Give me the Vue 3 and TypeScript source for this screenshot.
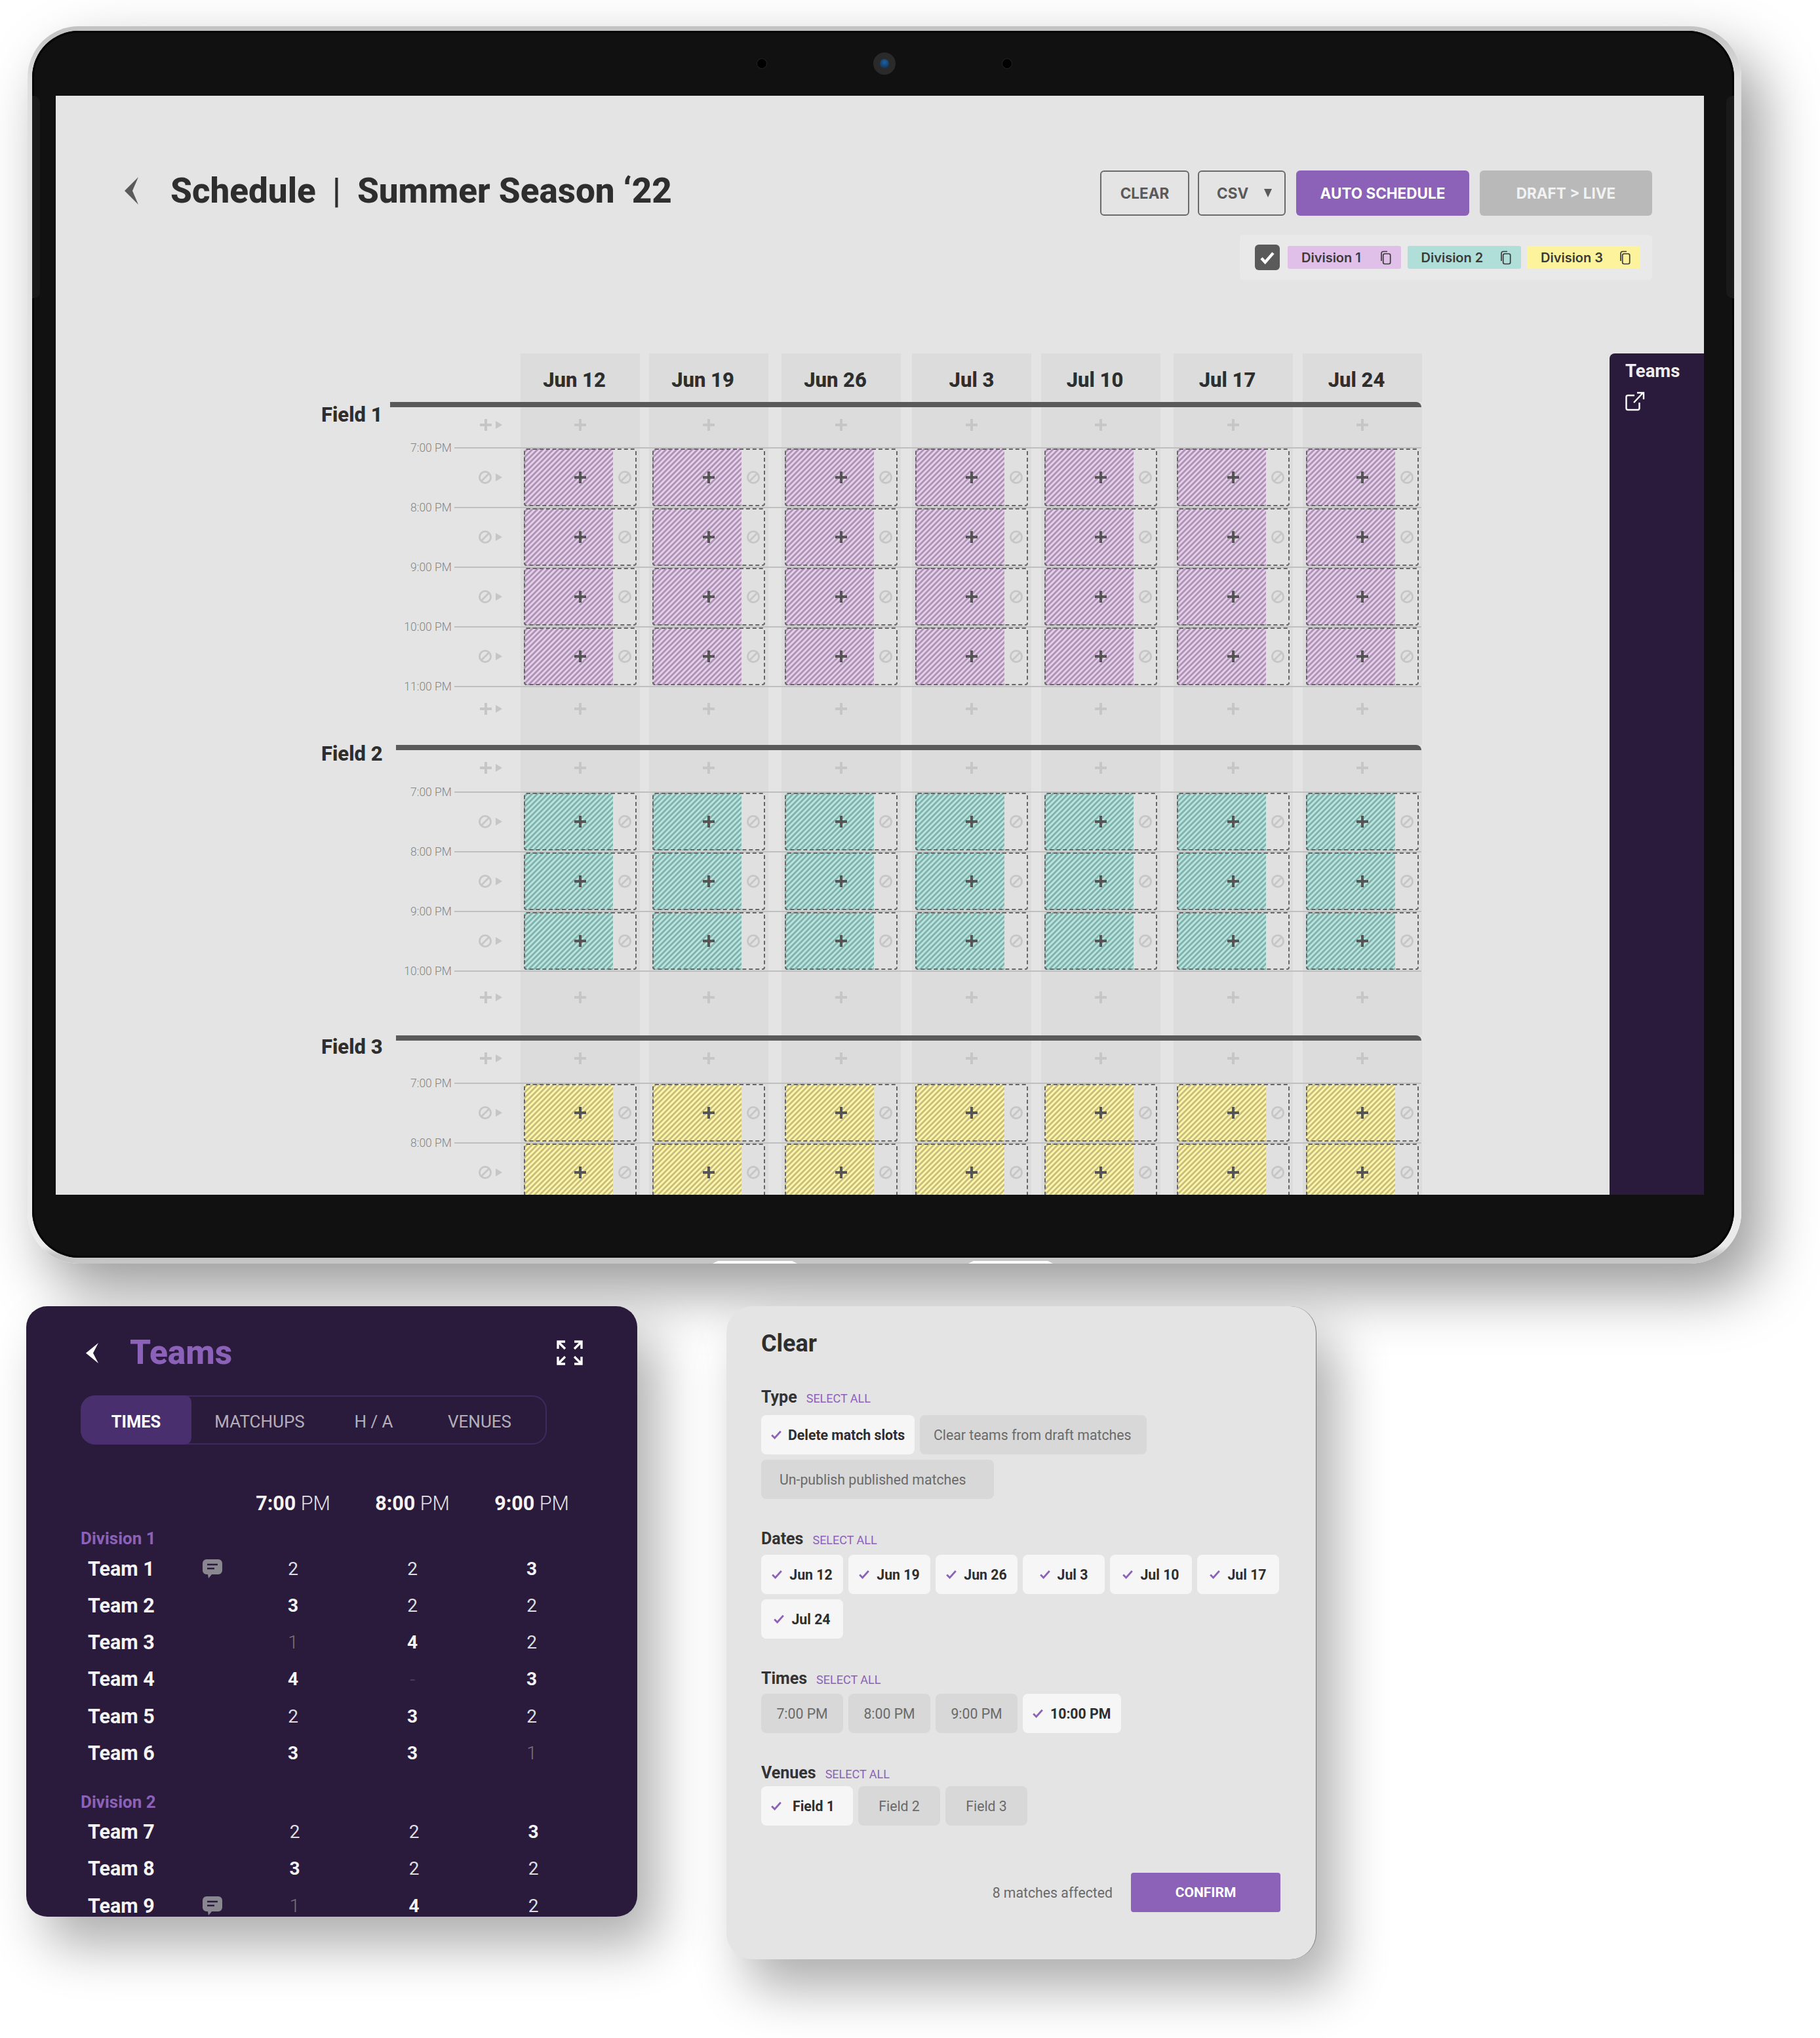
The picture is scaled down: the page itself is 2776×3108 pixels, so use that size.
<script setup lang="ts">
interface Field {
  name: string
  cls: string
  times: string[]
  barLeft: number
  labelTop: number
  addH: number
  tailH: number
  tailTop: number
}
const dates = ['Jun 12', 'Jun 19', 'Jun 26', 'Jul 3', 'Jul 10', 'Jul 17', 'Jul 24']
const fields: Field[] = [
  { name: 'Field 1', cls: 'purple', times: ['7:00 PM', '8:00 PM', '9:00 PM', '10:00 PM', '11:00 PM'], barLeft: 115, labelTop: 2, addH: 61, tailH: 88, tailTop: 24 },
  { name: 'Field 2', cls: 'teal', times: ['7:00 PM', '8:00 PM', '9:00 PM', '10:00 PM'], barLeft: 124, labelTop: -4, addH: 63, tailH: 97, tailTop: 30 },
  { name: 'Field 3', cls: 'yellow', times: ['7:00 PM', '8:00 PM', ''], barLeft: 124, labelTop: 0, addH: 64, tailH: 0, tailTop: 0 },
]
const legend = [
  { name: 'Division 1', cls: 'l-purple' },
  { name: 'Division 2', cls: 'l-teal' },
  { name: 'Division 3', cls: 'l-yellow' },
]
interface Team { name: string; note?: boolean; v: string[] }
const groups: { name: string; cls: string; teams: Team[] }[] = [
  {
    name: 'Division 1',
    cls: 'd1',
    teams: [
      { name: 'Team 1', note: true, v: ['2', '2', '3'] },
      { name: 'Team 2', v: ['3', '2', '2'] },
      { name: 'Team 3', v: ['1', '4', '2'] },
      { name: 'Team 4', v: ['4', '-', '3'] },
      { name: 'Team 5', v: ['2', '3', '2'] },
      { name: 'Team 6', v: ['3', '3', '1'] },
    ],
  },
  {
    name: 'Division 2',
    cls: 'd2',
    teams: [
      { name: 'Team 7', v: ['2', '2', '3'] },
      { name: 'Team 8', v: ['3', '2', '2'] },
      { name: 'Team 9', note: true, v: ['1', '4', '2'] },
    ],
  },
]
function numClass(v: string): string {
  return 'n' + (v === '-' ? '0' : v)
}
interface Chip { text: string; on: boolean; cls?: string }
const sections: { label: string; mb: number; chips: Chip[] }[] = [
  {
    label: 'Type', mb: 11,
    chips: [
      { text: 'Delete match slots', on: true, cls: 'auto' },
      { text: 'Clear teams from draft matches', on: false, cls: 'c-clear' },
      { text: 'Un-publish published matches', on: false, cls: 'c-unpub' },
    ],
  },
  { label: 'Dates', mb: 8, chips: dates.map((d) => ({ text: d, on: true })) },
  {
    label: 'Times', mb: 7,
    chips: [
      { text: '7:00 PM', on: false },
      { text: '8:00 PM', on: false },
      { text: '9:00 PM', on: false },
      { text: '10:00 PM', on: true, cls: 'auto2' },
    ],
  },
  {
    label: 'Venues', mb: 4,
    chips: [
      { text: 'Field 1', on: true, cls: 'c-f1' },
      { text: 'Field 2', on: false },
      { text: 'Field 3', on: false },
    ],
  },
]
</script>

<template>
  <div class="page">
    <svg class="defs" width="0" height="0">
      <symbol id="i-plus" viewBox="0 0 18 18"><path d="M9 0v18M0 9h18" fill="none" stroke="currentColor" stroke-width="4" /></symbol>
      <symbol id="i-ban" viewBox="0 0 20 20"><circle cx="10" cy="10" r="8.6" fill="none" stroke="currentColor" stroke-width="2.8" /><path d="M4 16L16 4" stroke="currentColor" stroke-width="2.8" /></symbol>
      <symbol id="i-copy" viewBox="0 0 18 22"><path d="M3 16V4.5C3 2.6 4.2 1.5 6 1.5h6" fill="none" stroke="currentColor" stroke-width="1.7" /><rect x="5.7" y="5" width="11" height="15.5" rx="2.4" fill="none" stroke="currentColor" stroke-width="1.7" /></symbol>
      <symbol id="i-check" viewBox="0 0 16 14"><path d="M1.2 7.5L5.6 12 14.8 1.8" fill="none" stroke="currentColor" stroke-width="2.8" /></symbol>
      <symbol id="i-note" viewBox="0 0 30 30"><path d="M6 0h18a6 6 0 0 1 6 6v11a6 6 0 0 1-6 6H14l-5 6-1-6H6a6 6 0 0 1-6-6V6a6 6 0 0 1 6-6z" fill="#8b8790" /><path d="M7 8h16M7 14h11" stroke="#2a1b3d" stroke-width="2.6" /></symbol>
    </svg>

    <div class="device">
      <span class="side left"></span>
      <span class="side right"></span>
      <span class="tab-notch n1"></span>
      <span class="tab-notch n2"></span>
      <div class="bezel">
        <div class="sensors">
          <span class="dot"></span>
          <span class="cam"><i></i></span>
          <span class="dot"></span>
        </div>
        <div class="screen">
          <div class="topbar">
            <div class="title-wrap">
              <svg class="back" width="21" height="42" viewBox="0 0 21 42"><path d="M21 0L0 21l21 21-9-21z" fill="#5a5a5a" /></svg>
              <h1 class="title"><span>Schedule</span><span class="sep">|</span><span>Summer Season ‘22</span></h1>
            </div>
            <div class="actions">
              <div class="btns">
                <button class="btn outline clear-b">CLEAR</button>
                <button class="btn outline csv-b">CSV<span class="caret"></span></button>
                <button class="btn primary">AUTO SCHEDULE</button>
                <button class="btn muted">DRAFT &gt; LIVE</button>
              </div>
              <div class="legend">
                <span class="legend-check"><svg width="22" height="20" viewBox="0 0 16 14"><path d="M1.500 7.500L5.600 12 14.500 1.800" fill="none" stroke="currentColor" stroke-width="3.200" /></svg></span>
                <span v-for="l in legend" :key="l.name" class="legend-chip" :class="l.cls">
                  {{ l.name }}
                  <svg width="18" height="22"><use href="#i-copy" /></svg>
                </span>
              </div>
            </div>
          </div>

          <div class="sched">
            <div class="row head">
              <div class="gutter"></div>
              <div v-for="d in dates" :key="d" class="cell">
                <span class="date" :class="{ centre: d === 'Jul 3' }">{{ d }}</span>
              </div>
              <svg class="plus add-date" width="18" height="18"><use href="#i-plus" /></svg>
            </div>

            <section v-for="f in fields" :key="f.name" class="field" :style="{ '--tail-h': f.tailH + 'px', '--tail-top': f.tailTop + 'px', '--add-h': f.addH + 'px' }">
              <div class="bar-row">
                <div class="flabel" :style="{ width: f.barLeft + 'px', marginTop: f.labelTop + 'px' }">{{ f.name }}</div>
                <div class="bar"></div>
              </div>
              <div class="row add">
                <div class="gutter icons">
                  <svg class="plus" width="18" height="18"><use href="#i-plus" /></svg>
                  <span class="tri"></span>
                </div>
                <div v-for="d in dates" :key="d" class="cell">
                  <svg class="plus" width="18" height="18"><use href="#i-plus" /></svg>
                </div>
              </div>
              <template v-for="(t, i) in f.times" :key="i">
                <div v-if="t" class="tline">
                  <span class="tlabel">{{ t }}</span>
                  <span class="tbar"></span>
                </div>
                <div v-if="i < f.times.length - 1" class="row slots">
                  <div class="gutter icons ban-g">
                    <svg class="ban" width="20" height="20"><use href="#i-ban" /></svg>
                    <span class="tri"></span>
                  </div>
                  <div v-for="d in dates" :key="d" class="cell">
                    <div class="slot" :class="f.cls">
                      <svg class="splus" width="18" height="18"><use href="#i-plus" /></svg>
                      <svg class="ban" width="20" height="20"><use href="#i-ban" /></svg>
                    </div>
                  </div>
                </div>
              </template>
              <div v-if="f.tailH" class="row tail">
                <div class="gutter icons">
                  <svg class="plus" width="18" height="18"><use href="#i-plus" /></svg>
                  <span class="tri"></span>
                </div>
                <div v-for="d in dates" :key="d" class="cell">
                  <svg class="plus" width="18" height="18"><use href="#i-plus" /></svg>
                </div>
              </div>
            </section>
          </div>

          <aside class="drawer">
            <div class="drawer-title">Teams</div>
            <svg width="30" height="30" viewBox="0 0 30 30"><path d="M14 6H4a2.5 2.5 0 0 0-2.5 2.5v17A2.5 2.5 0 0 0 4 28h15a2.5 2.5 0 0 0 2.5-2.5V17" fill="none" stroke="#fff" stroke-width="2.4" /><path d="M13 17L27 2M18 2h10v10" fill="none" stroke="#fff" stroke-width="2.4" /></svg>
          </aside>
        </div>
      </div>
    </div>

    <div class="cards">
      <div class="teams">
        <div class="teams-head">
          <svg width="19" height="33" viewBox="0 0 19 33"><path d="M19 1L0 16.500 19 32 11 16.500z" fill="#fff" /></svg>
          <h2>Teams</h2>
          <svg class="expand" width="40" height="38" viewBox="0 0 40 38"><path d="M13 2H2v11M2 2l11 11M27 2h11v11M38 2L27 13M13 36H2V25M2 36l11-11M27 36h11V25M38 36L27 25" fill="none" stroke="#fff" stroke-width="3.400" /></svg>
        </div>
        <div class="tabs">
          <span class="tab t-active">TIMES</span>
          <span class="tab t-match">MATCHUPS</span>
          <span class="tab t-ha">H / A</span>
          <span class="tab t-venue">VENUES</span>
        </div>
        <div class="hours">
          <span v-for="h in ['7:00', '8:00', '9:00']" :key="h"><b>{{ h }}</b> PM</span>
        </div>
        <div v-for="g in groups" :key="g.name" class="group" :class="g.cls">
          <div class="gname">{{ g.name }}</div>
          <div v-for="t in g.teams" :key="t.name" class="team">
            <span class="tname">{{ t.name }}</span>
            <span class="tnote"><svg v-if="t.note" width="30" height="30"><use href="#i-note" /></svg></span>
            <span v-for="(v, i) in t.v" :key="i" class="num" :class="numClass(v)">{{ v }}</span>
          </div>
        </div>
      </div>

      <div class="clear">
        <h2>Clear</h2>
        <div v-for="s in sections" :key="s.label" class="sec">
          <div class="sec-head" :style="{ marginBottom: s.mb + 'px' }">
            <span class="sec-label">{{ s.label }}</span>
            <span class="sel">SELECT ALL</span>
          </div>
          <div class="chips">
            <span v-for="c in s.chips" :key="c.text" class="chip" :class="[c.on ? 'on' : 'off', c.cls]">
              <svg v-if="c.on" width="16" height="14"><use href="#i-check" /></svg>
              {{ c.text }}
            </span>
          </div>
        </div>
        <div class="foot">
          <span>8 matches affected</span>
          <button class="confirm">CONFIRM</button>
        </div>
      </div>
    </div>
  </div>
</template>

<style>
html, body { background: #fff; }
</style>

<style scoped>
.page {
  width: 2776px;
  height: 3108px;
  box-sizing: border-box;
  padding: 40px 0 0 42px;
  background: #fff;
  overflow: hidden;
  font-family: Roboto, "Liberation Sans", sans-serif;
}
.defs { position: absolute; }
button { font-family: inherit; border: 0; padding: 0; }
h1, h2 { margin: 0; }

.device {
  position: relative;
  width: 2614px;
  height: 1887px;
  box-sizing: border-box;
  padding: 7px 11px 9px 7px;
  border-radius: 78px;
  background: linear-gradient(180deg, #c4c4c4 0 12px, #dfdfdf 80px, #ebebeb 1860px, #c6c6c6 1874px);
  box-shadow: 30px 42px 90px rgba(0, 0, 0, 0.4);
}
.side {
  position: absolute;
  top: 106px;
  height: 309px;
  width: 12px;
  background: #1a1a1a;
  z-index: 2;
}
.side.left { left: 7px; border-radius: 0 10px 10px 0; }
.side.right { right: 11px; border-radius: 10px 0 0 10px; }
.tab-notch {
  position: absolute;
  bottom: 0;
  width: 129px;
  height: 4px;
  background: #fff;
  clip-path: polygon(6% 0, 94% 0, 100% 100%, 0 100%);
}
.tab-notch.n1 { left: 1045px; }
.tab-notch.n2 { left: 1435px; }
.bezel {
  height: 100%;
  box-sizing: border-box;
  padding: 0 46px 96px 36px;
  background: #111;
  border-radius: 71px;
  box-shadow: inset 0 0 0 3px #050505;
}
.sensors {
  height: 99px;
  display: flex;
  align-items: center;
  justify-content: center;
  gap: 163px;
  padding: 0 0 0 13px;
  box-sizing: border-box;
}
.dot {
  width: 14px;
  height: 14px;
  border-radius: 50%;
  background: #000;
  box-shadow: 0 0 0 1px #222;
}
.cam {
  width: 34px;
  height: 34px;
  border-radius: 50%;
  background: #2a2a2a;
  display: flex;
  align-items: center;
  justify-content: center;
}
.cam i {
  width: 14px;
  height: 14px;
  border-radius: 50%;
  background: radial-gradient(circle at 50% 35%, #21609f, #0c2a50);
}
.screen {
  position: relative;
  height: 1676px;
  background: #e4e4e4;
  overflow: hidden;
}

.topbar {
  display: flex;
  justify-content: space-between;
  padding: 114px 79px 0 105px;
  height: 393px;
  box-sizing: border-box;
}
.title-wrap { display: flex; align-items: flex-start; gap: 49px; padding-top: 10px; }
.title {
  display: flex;
  gap: 25px;
  font-size: 53px;
  line-height: 40px;
  padding-top: 1px;
  font-weight: 800;
  color: #2e2e2e;
  white-space: nowrap;
}
.sep { font-weight: 500; }
.actions { display: flex; flex-direction: column; align-items: flex-end; gap: 29px; }
.btns { display: flex; }
.btn {
  height: 69px;
  border-radius: 6px;
  font-family: Inter, Roboto, sans-serif;
  font-size: 22.500px;
  font-weight: 700;
  white-space: nowrap;
}
.outline { background: transparent; color: #5a5a5a; border: 2px solid #6a6a6a; box-sizing: border-box; }
.clear-b { width: 136px; margin-right: 13px; }
.csv-b { width: 134px; margin-right: 16px; display: flex; align-items: center; padding-left: 27px; }
.caret {
  margin-left: 24px;
  border-left: 6.500px solid transparent;
  border-right: 6.500px solid transparent;
  border-top: 13px solid #5a5a5a;
}
.primary { width: 264px; background: #8b62b8; color: #fff; margin-right: 16px; }
.muted { width: 263px; background: #b9b9b9; color: #f2f2f2; }
.legend {
  height: 69px;
  box-sizing: border-box;
  width: 629px;
  background: #e9e9e9;
  border-radius: 6px;
  display: flex;
  align-items: center;
  padding-left: 23px;
}
.legend-check {
  width: 38px;
  height: 39px;
  border-radius: 6px;
  background: #5a5a5a;
  color: #fff;
  display: flex;
  align-items: center;
  justify-content: center;
  margin-right: 12px;
}
.legend-chip {
  width: 173px;
  height: 35px;
  box-sizing: border-box;
  margin-right: 9.500px;
  border-radius: 3px;
  padding: 0 15px 0 21px;
  display: flex;
  align-items: center;
  justify-content: space-between;
  font-family: Inter, Roboto, sans-serif;
  font-size: 20px;
  font-weight: 600;
  color: #3a3a3a;
}
.l-purple { background: #e0c0e8; }
.l-teal { background: #b0dfda; }
.l-yellow { background: #fdf39c; }

.sched { width: 1688px; margin-left: 395px; }
.row { display: flex; }
.gutter { width: 314px; flex: none; box-sizing: border-box; }
.cell {
  width: 182px;
  flex: none;
  background: #dcdcdc;
  box-sizing: border-box;
}
.row .cell:nth-child(3) { margin-left: 14px; }
.row .cell:nth-child(4) { margin-left: 20px; }
.row .cell:nth-child(5) { margin-left: 17px; }
.row .cell:nth-child(6) { margin-left: 15px; }
.row .cell:nth-child(7) { margin-left: 20px; }
.row .cell:nth-child(8) { margin-left: 15px; }

.head { height: 74px; position: relative; }
.head .cell {
  display: flex;
  align-items: center;
  justify-content: center;
  padding-right: 18px;
}
.head .cell:has(.centre) { padding-right: 0; }
.date { font-size: 31px; font-weight: 800; color: #2e2e2e; line-height: 1; margin-top: 6px; }
.plus { color: #c6c6c6; display: block; }
.add-date { margin: 30px 0 0 31px; }

.bar-row { display: flex; height: 8px; align-items: flex-start; }
.flabel {
  flex: none;
  box-sizing: border-box;
  height: 0;
  line-height: 36px;
  padding-left: 10px;
  font-size: 31px;
  font-weight: 800;
  color: #2e2e2e;
  white-space: nowrap;
}
.bar { flex: 1; height: 8px; background: #5a5a5a; border-top-right-radius: 8px; }

.add { height: var(--add-h); }
.tail { height: var(--tail-h); }
.add .cell, .tail .cell { display: flex; justify-content: center; }
.add .cell { padding-top: 18px; }
.tail .cell { padding-top: var(--tail-top); }
.icons { display: flex; justify-content: flex-end; align-items: flex-start; gap: 6px; padding-right: 28px; color: #c6c6c6; }
.add .icons { padding-top: 18px; }
.tail .icons { padding-top: var(--tail-top); }
.tri {
  border-left: 10px solid #c6c6c6;
  border-top: 6px solid transparent;
  border-bottom: 6px solid transparent;
  margin-top: 3px;
}
.tline { display: flex; align-items: center; height: 2px; position: relative; }
.tlabel {
  width: 209px;
  flex: none;
  text-align: right;
  font-size: 17.500px;
  font-weight: 300;
  color: #858585;
  white-space: nowrap;
}
.tbar { flex: 1; height: 2px; margin-left: 4px; background: #bfbfbf; }
.slots { height: 89px; }
.ban-g { align-items: center; padding-right: 28px; padding-bottom: 2px; }
.ban-g .tri { margin-top: 0; }
.ban { color: #c6c6c6; display: block; }
.slots .cell { padding: 0 5px 1px 5px; }
.slot {
  height: 88px;
  box-sizing: border-box;
  border: 2px dashed #666;
  border-radius: 4px;
  display: grid;
  grid-template-columns: 1fr 18px 1fr;
  align-items: center;
  --a: #e6cbec;
  --b: #ad98b3;
  background:
    linear-gradient(#e0e0e0, #e0e0e0) right / 36px 100% no-repeat,
    repeating-linear-gradient(135deg, var(--a) 0 3.400px, var(--b) 3.400px 5.660px);
  background-origin: border-box;
  background-clip: border-box;
}
.slot.teal { --a: #b6e3de; --b: #84b2ad; }
.slot.yellow { --a: #fdf4a8; --b: #c9bf80; }
.splus { grid-column: 2; color: #555; display: block; }
.slot .ban { grid-column: 3; justify-self: end; margin-right: 6px; }

.drawer {
  position: absolute;
  right: 0;
  top: 393px;
  bottom: 0;
  width: 144px;
  box-sizing: border-box;
  padding: 9px 0 0 24px;
  background: #2a1b3d;
  border-top-left-radius: 8px;
  color: #fff;
}
.drawer-title { font-size: 27.500px; font-weight: 700; line-height: 36px; margin-bottom: 13px; color: #eee; }
.drawer svg { display: block; }

.cards { display: flex; align-items: flex-start; margin: 65px 0 0 -2px; gap: 136px; position: relative; }
.teams {
  width: 932px;
  height: 931px;
  box-sizing: border-box;
  padding: 48px 0 0 83px;
  background: #2a1b3d;
  border-radius: 32px;
  overflow: hidden;
  box-shadow: 30px 44px 80px rgba(0, 0, 0, 0.32);
  color: #fff;
  flex: none;
}
.teams-head { height: 46px; display: flex; align-items: center; padding-left: 8px; }
.teams-head h2 { font-size: 51.500px; line-height: 46px; font-weight: 800; color: #8b62b8; margin-left: 48px; }
.expand { margin-left: 495px; }
.tabs {
  margin-top: 42px;
  width: 711px;
  height: 75px;
  box-sizing: border-box;
  border: 2px solid #3e2a5e;
  border-radius: 22px;
  display: flex;
  align-items: center;
  font-size: 26px;
  color: #b3afba;
  margin-bottom: 70px;
}
.tab { display: flex; align-items: center; justify-content: center; height: 100%; padding-top: 4px; box-sizing: border-box; }
.t-active {
  width: 169px;
  margin: -2px 0 -2px -2px;
  height: 75px;
  background: #4a2f6e;
  border-radius: 22px 10px 10px 22px;
  color: #fff;
  font-weight: 700;
  font-size: 25.500px;
}
.t-match { width: 208px; }
.t-ha { width: 140px; }
.t-venue { width: 183px; }
.hours { display: flex; height: 40px; margin: 0 0 16px 233px; font-size: 30.500px; line-height: 40px; color: #e3e3e6; font-weight: 300; }
.hours span { width: 182px; text-align: center; }
.hours b { font-weight: 700; color: #f4f4f4; }
.group.d2 { margin-top: 29px; }
.gname { height: 34px; line-height: 34px; font-size: 26px; font-weight: 700; color: #8b62b8; margin-bottom: 1px; }
.team { display: flex; align-items: center; height: 56.250px; }
.tname { width: 186px; padding-left: 11px; box-sizing: border-box; font-size: 30.500px; font-weight: 700; color: #f4f4f4; }
.tnote { width: 47px; flex: none; display: flex; padding-top: 2px; }
.num { width: 182px; text-align: center; font-size: 28px; color: #dedde0; font-weight: 400; }
.d2 .num { padding-left: 5px; box-sizing: border-box; }
.n3, .n4 { font-weight: 700; color: #f4f4f4; }
.n1 { font-weight: 300; color: #77727f; }
.n0 { color: #4a3a60; }

.clear {
  width: 900px;
  height: 996px;
  box-sizing: border-box;
  padding: 35px 54px 0 53px;
  background: #e4e4e4;
  border-radius: 40px;
  border-right: 1px solid #777;
  box-shadow: 30px 44px 80px rgba(0, 0, 0, 0.32);
  flex: none;
}
.clear h2 { font-size: 36px; line-height: 44px; font-weight: 700; color: #2e2e2e; margin-bottom: 42px; }
.sec { margin-bottom: 43px; }
.sec-head { height: 34px; display: flex; align-items: center; gap: 14px; }
.sec-label { font-size: 25px; font-weight: 700; color: #333; }
.sel { font-size: 18px; font-weight: 400; color: #8b62b8; margin-top: 5px; }
.chips { display: flex; flex-wrap: wrap; gap: 8px; }
.chip {
  width: 125px;
  height: 60px;
  box-sizing: border-box;
  border-radius: 8px;
  display: flex;
  align-items: center;
  justify-content: center;
  gap: 11px;
  font-size: 21.250px;
  white-space: nowrap;
}
.chip.on { background: #f6f6f6; color: #2e2e2e; font-weight: 700; }
.chip.on svg { color: #8b62b8; }
.chip.off { background: #d8d8d8; color: #6a6a6a; }
.chip.auto { width: 234px; justify-content: flex-start; padding-left: 15px; gap: 10px; }
.chip.auto2 { width: 150px; justify-content: flex-start; padding-left: 15px; }
.chip.c-clear { width: 346px; justify-content: flex-start; padding-left: 21px; }
.chip.c-unpub { width: 355px; justify-content: flex-start; padding-left: 28px; }
.chip.c-f1 { width: 140px; justify-content: flex-start; padding-left: 15px; gap: 17px; }
.foot { display: flex; justify-content: flex-end; align-items: center; gap: 28px; margin-top: 72px; font-size: 21.250px; color: #6a6a6a; }
.confirm {
  width: 228px;
  height: 60px;
  background: #8b62b8;
  border-radius: 4px;
  color: #fff;
  font-size: 21px;
  font-weight: 700;
}
</style>
